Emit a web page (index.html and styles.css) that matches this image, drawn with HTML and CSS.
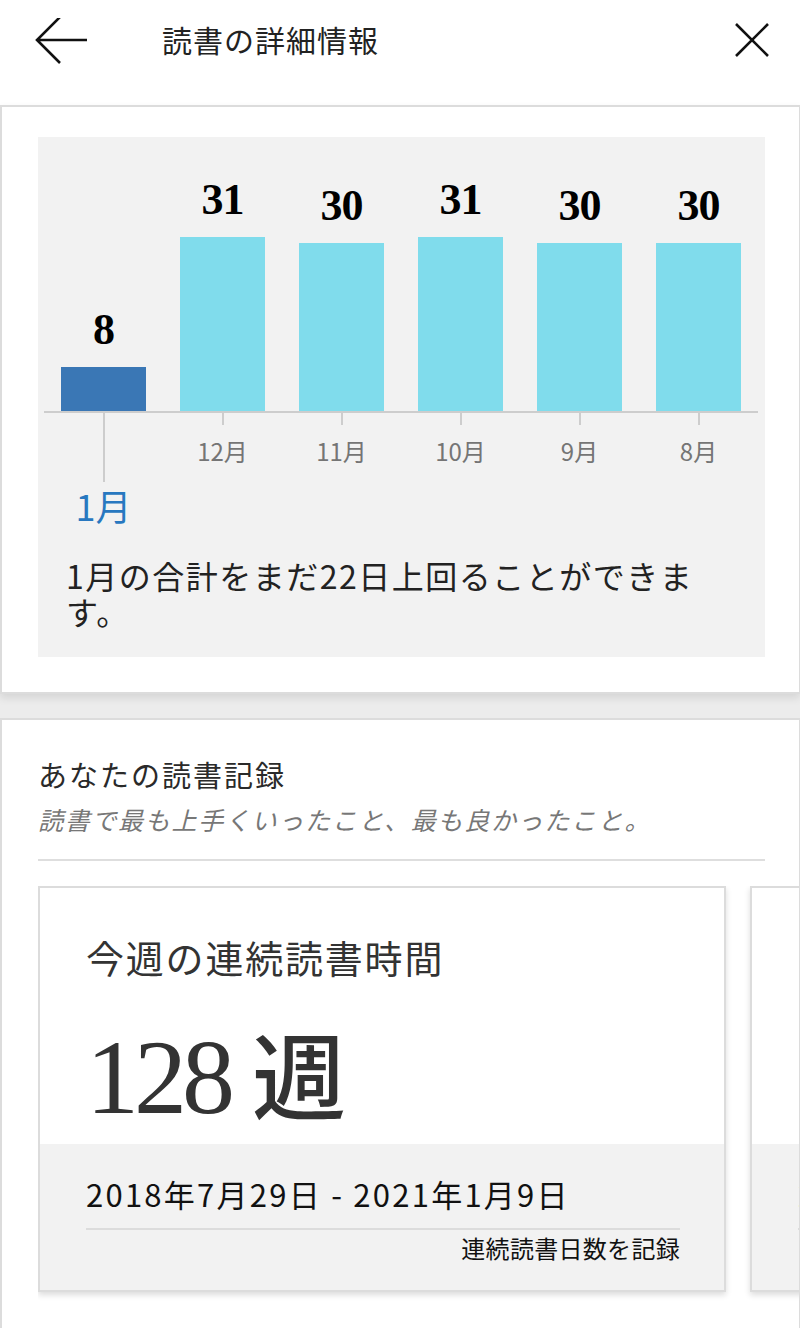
FILE: index.html
```html
<!DOCTYPE html>
<html lang="ja">
<head>
<meta charset="utf-8">
<link rel="stylesheet" href="styles.css">
</head>
<body>
<header class="topbar">
  <svg class="icon back" viewBox="0 0 60 50" width="60" height="50" aria-label="戻る">
    <path d="M53 22 H3 M26 -1 L3 22 L26 45" fill="none" stroke="#111" stroke-width="2.6"/>
  </svg>
  <h1 class="title">読書の詳細情報</h1>
  <svg class="icon close" viewBox="0 0 40 40" width="40" height="40" aria-label="閉じる">
    <path d="M4 4 L36 36 M36 4 L4 36" fill="none" stroke="#111" stroke-width="2.6"/>
  </svg>
</header>

<section class="card">
  <div class="chart">
    <div class="bars">
      <div class="col">
        <span class="val">8</span>
        <div class="bar current" style="height:44px"></div>
      </div>
      <div class="col">
        <span class="val">31</span>
        <div class="bar" style="height:174px"></div>
      </div>
      <div class="col">
        <span class="val">30</span>
        <div class="bar" style="height:168px"></div>
      </div>
      <div class="col">
        <span class="val">31</span>
        <div class="bar" style="height:174px"></div>
      </div>
      <div class="col">
        <span class="val">30</span>
        <div class="bar" style="height:168px"></div>
      </div>
      <div class="col">
        <span class="val">30</span>
        <div class="bar" style="height:168px"></div>
      </div>
    </div>
    <div class="axis">
      <div class="mcol cur"><span class="tick long"></span><span class="mlabel cur-label">1月</span></div>
      <div class="mcol"><span class="tick"></span><span class="mlabel">12月</span></div>
      <div class="mcol"><span class="tick"></span><span class="mlabel">11月</span></div>
      <div class="mcol"><span class="tick"></span><span class="mlabel">10月</span></div>
      <div class="mcol"><span class="tick"></span><span class="mlabel">9月</span></div>
      <div class="mcol"><span class="tick"></span><span class="mlabel">8月</span></div>
    </div>
    <p class="summary">1月の合計をまだ22日上回ることができます。</p>
  </div>
</section>

<section class="card second">
  <h2 class="sec-title">あなたの読書記録</h2>
  <p class="sec-sub">読書で最も上手くいったこと、最も良かったこと。</p>
  <hr class="divider">
  <div class="tiles">
    <article class="tile">
      <div class="tile-main">
        <h3 class="tile-title">今週の連続読書時間</h3>
        <div class="big"><span class="num">128</span><span class="unit">週</span></div>
      </div>
      <div class="tile-foot">
        <div class="range">2018年7月29日 - 2021年1月9日</div>
        <div class="foot-line"></div>
        <div class="foot-note">連続読書日数を記録</div>
      </div>
    </article>
    <article class="tile">
      <div class="tile-main">
        <h3 class="tile-title">一日の最長読書時間</h3>
        <div class="big"><span class="num">5</span><span class="unit">時間</span></div>
      </div>
      <div class="tile-foot">
        <div class="range">2020年5月3日</div>
        <div class="foot-line"></div>
        <div class="foot-note">最長記録</div>
      </div>
    </article>
  </div>
</section>
</body>
</html>
```

FILE: styles.css
```css
* { box-sizing: border-box; }
html, body { margin: 0; padding: 0; }
body {
  width: 800px;
  height: 1328px;
  overflow: hidden;
  background: #ececec;
  font-family: "Noto Sans CJK JP", "Noto Sans", sans-serif;
  color: #222;
}

.topbar {
  height: 105px;
  background: #fff;
  display: flex;
  align-items: flex-start;
  padding: 17px 0 0 34px;
}
.icon { display: block; flex: none; }
.back { margin-top: 1px; }
.title {
  margin: 0 0 0 68px;
  font-size: 30px;
  font-weight: 400;
  line-height: 44px;
  letter-spacing: 1px;
  color: #222;
  flex: 1;
}
.close { margin: 3px 28px 0 0; }

.card {
  background: #fff;
  border: 2px solid #dcdcdc;
  border-right-width: 1px;
  padding: 30px 34px 35px 36px;
  box-shadow: 0 4px 8px rgba(0,0,0,0.10);
}

.chart {
  background: #f2f2f2;
  padding: 0 6px 28px 6px;
}
.bars {
  height: 276px;
  display: grid;
  grid-template-columns: repeat(6, 1fr);
  align-items: end;
  border-bottom: 2px solid #cdcdcd;
  width: 714px;
}
.col {
  display: flex;
  flex-direction: column;
  align-items: center;
}
.val {
  font-family: "Liberation Serif", "Times New Roman", serif;
  font-weight: 700;
  font-size: 44px;
  line-height: 44px;
  color: #000;
  margin-bottom: 15px;
  letter-spacing: -1px;
}
.bar {
  width: 85px;
  background: #80dcec;
}
.bar.current { background: #3a77b5; }

.axis {
  display: grid;
  grid-template-columns: repeat(6, 1fr);
  width: 714px;
  align-items: start;
}
.mcol {
  display: flex;
  flex-direction: column;
  align-items: center;
}
.tick {
  display: block;
  width: 2px;
  height: 12px;
  background: #cdcdcd;
}
.tick.long { height: 69px; }
.mlabel {
  margin-top: 14px;
  font-size: 24px;
  line-height: 24px;
  color: #757575;
}
.mlabel.cur-label {
  margin-top: 5px;
  font-size: 36px;
  line-height: 36px;
  color: #2878c0;
}
.summary {
  margin: 34px 0 0 22px;
  max-width: 650px;
  font-size: 32px;
  line-height: 36px;
  letter-spacing: 1.5px;
  color: #222;
}

.second {
  margin-top: 24px;
  padding: 34px 0 40px 36px;
  height: 640px;
  box-shadow: none;
}
.sec-title {
  margin: 0;
  font-size: 29px;
  font-weight: 400;
  line-height: 40px;
  letter-spacing: 2px;
  color: #2a2a2a;
}
.sec-sub {
  margin: 8px 0 0;
  font-size: 25px;
  line-height: 34px;
  font-style: italic;
  letter-spacing: 1.7px;
  color: #777;
}
.divider {
  margin: 23px 34px 0 0;
  border: 0;
  height: 2px;
  background: #dedede;
}
.tiles {
  display: flex;
  gap: 24px;
  margin-top: 25px;
  overflow: hidden;
  padding-bottom: 12px;
}
.tile {
  flex: none;
  width: 688px;
  height: 406px;
  border: 2px solid #dcdcdc;
  background: #fff;
  box-shadow: 0 3px 6px rgba(0,0,0,0.14);
  display: flex;
  flex-direction: column;
}
.tile-main {
  flex: 1;
  padding: 45px 44px 0 46px;
}
.tile-title {
  margin: 0;
  font-size: 38px;
  font-weight: 400;
  line-height: 48px;
  letter-spacing: 1.8px;
  color: #333;
}
.big {
  margin-top: 36px;
  color: #333;
  line-height: 110px;
  white-space: nowrap;
  display: flex;
  align-items: baseline;
}
.num {
  font-family: "Liberation Serif", "Times New Roman", serif;
  font-size: 106px;
  letter-spacing: -5px;
}
.unit {
  font-size: 94px;
  font-weight: 500;
  margin-left: 22px;
}
.tile-foot {
  height: 146px;
  background: #f2f2f2;
  padding: 30px 44px 0 46px;
}
.range {
  font-size: 31px;
  line-height: 40px;
  letter-spacing: 2.25px;
  color: #111;
  white-space: nowrap;
}
.foot-line {
  margin-top: 14px;
  height: 2px;
  background: #dcdcdc;
}
.foot-note {
  margin-top: 3px;
  text-align: right;
  font-size: 24px;
  line-height: 30px;
  letter-spacing: 0.3px;
  color: #111;
}
```
